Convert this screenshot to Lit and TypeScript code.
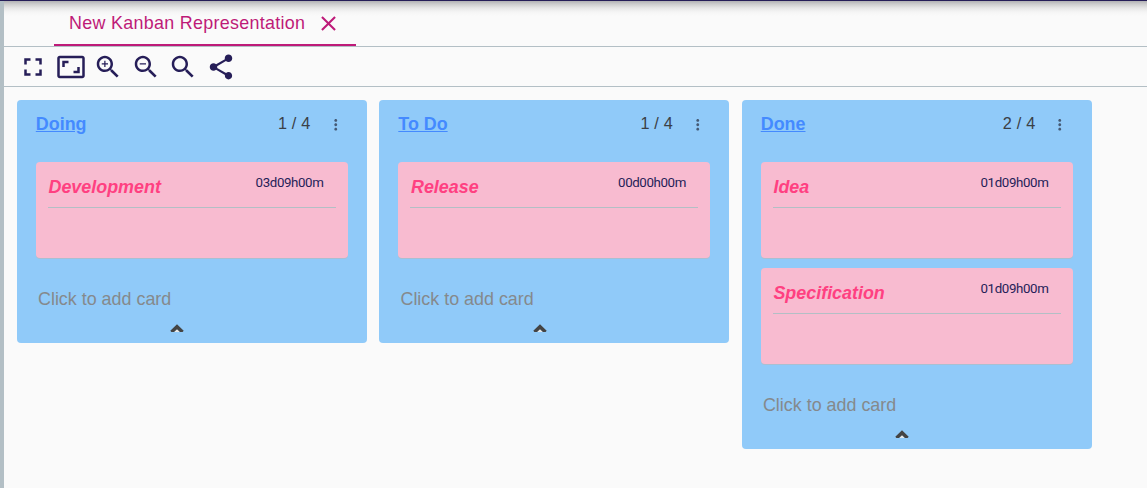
import { LitElement, html, css, svg } from "lit";
import { customElement, property } from "lit/decorators.js";

interface Card {
  label: string;
  duration: string;
}
interface Lane {
  label: string;
  count: string;
  cards: Card[];
}

const LANES: Lane[] = [
  { label: "Doing", count: "1 / 4", cards: [{ label: "Development", duration: "03d09h00m" }] },
  { label: "To Do", count: "1 / 4", cards: [{ label: "Release", duration: "00d00h00m" }] },
  {
    label: "Done",
    count: "2 / 4",
    cards: [
      { label: "Idea", duration: "01d09h00m" },
      { label: "Specification", duration: "01d09h00m" },
    ],
  },
];

const TOOLS: string[] = [
  "M7 14H5v5h5v-2H7v-3zm-2-4h2V7h3V5H5v5zm12 7h-3v2h5v-5h-2v3zM14 5v2h3v3h2V5h-5z",
  "M19 12h-2v3h-3v2h5v-5zM7 9h3V7H5v5h2V9zm14-6H3c-1.1 0-2 .9-2 2v14c0 1.1.9 2 2 2h18c1.1 0 2-.9 2-2V5c0-1.1-.9-2-2-2zm0 16.01H3V4.99h18v14.02z",
  "M15.5 14h-.79l-.28-.27C15.41 12.59 16 11.11 16 9.5 16 5.91 13.09 3 9.5 3S3 5.91 3 9.5 5.91 16 9.5 16c1.61 0 3.09-.59 4.23-1.57l.27.28v.79l5 4.99L20.49 19l-4.99-5zm-6 0C7.01 14 5 11.99 5 9.5S7.01 5 9.5 5 14 7.01 14 9.5 11.99 14 9.5 14zm2.5-4h-2v2H9v-2H7V9h2V7h1v2h2v1z",
  "M15.5 14h-.79l-.28-.27C15.41 12.59 16 11.11 16 9.5 16 5.91 13.09 3 9.5 3S3 5.91 3 9.5 5.91 16 9.5 16c1.61 0 3.09-.59 4.23-1.57l.27.28v.79l5 4.99L20.49 19l-4.99-5zm-6 0C7.01 14 5 11.99 5 9.5S7.01 5 9.5 5 14 7.01 14 9.5 11.99 14 9.5 14zM7 9h5v1H7z",
  "M15.5 14h-.79l-.28-.27C15.41 12.59 16 11.11 16 9.5 16 5.91 13.09 3 9.5 3S3 5.91 3 9.5 5.91 16 9.5 16c1.61 0 3.09-.59 4.23-1.57l.27.28v.79l5 4.99L20.49 19l-4.99-5zm-6 0C7.01 14 5 11.99 5 9.5S7.01 5 9.5 5 14 7.01 14 9.5 11.99 14 9.5 14z",
  "M18 16.08c-.76 0-1.44.3-1.96.77L8.91 12.7c.05-.23.09-.46.09-.7s-.04-.47-.09-.7l7.05-4.11c.54.5 1.25.81 2.04.81 1.66 0 3-1.34 3-3s-1.34-3-3-3-3 1.34-3 3c0 .24.04.47.09.7L8.04 9.81C7.5 9.31 6.79 9 6 9c-1.66 0-3 1.34-3 3s1.34 3 3 3c.79 0 1.5-.31 2.04-.81l7.12 4.16c-.05.21-.08.43-.08.65 0 1.61 1.31 2.92 2.92 2.92 1.61 0 2.92-1.31 2.92-2.92s-1.31-2.92-2.92-2.92z",
];

const icon = (d: string) => html`<svg class="icon" viewBox="0 0 24 24">${svg`<path d=${d}></path>`}</svg>`;

@customElement("kanban-card")
class KanbanCard extends LitElement {
  @property({ attribute: false }) card!: Card;

  static styles = css`
    :host {
      display: block;
      box-sizing: border-box;
      height: 96px;
      padding: 0 12px;
      border-radius: 4px;
      background: #f8bbd0;
      box-shadow: 0 1px 0 #a9bfd2;
    }
    .head {
      display: flex;
      justify-content: space-between;
      box-sizing: border-box;
      height: 46px;
      border-bottom: 1px solid #b3bfc5;
    }
    .label {
      padding: 14px 0 0 0.5px;
      font: italic bold 17.9px/22px "Liberation Sans", Arial, sans-serif;
      color: #ff4081;
    }
    .duration {
      padding: 12px 12.5px 0 0;
      font: 13.3px/17px Roboto, sans-serif;
      letter-spacing: -0.38px;
      color: #261e58;
    }
  `;

  render() {
    return html`<div class="head">
      <span class="label">${this.card.label}</span>
      <span class="duration">${this.card.duration}</span>
    </div>`;
  }
}

@customElement("kanban-lane")
class KanbanLane extends LitElement {
  @property({ attribute: false }) lane!: Lane;

  static styles = css`
    :host {
      display: flex;
      flex-direction: column;
      box-sizing: border-box;
      flex: none;
      width: 350px;
      padding: 0 19px;
      border-radius: 4px;
      background: #90caf9;
      font: 17.9px/24px "Liberation Sans", Arial, sans-serif;
    }
    .head {
      display: flex;
      height: 62px;
      padding-top: 12px;
      box-sizing: border-box;
    }
    .title {
      flex: 1;
      font-weight: bold;
      margin-left: -0.2px;
      color: #448aff;
      text-decoration: underline;
    }
    .count {
      font-size: 16.25px;
      line-height: 22px;
      letter-spacing: 0.19px;
      color: #3b4046;
      margin-right: 16px;
    }
    .more {
      width: 17.5px;
      height: 17.5px;
      margin: 4px 4px 0 0;
      fill: #455a75;
    }
    .cards {
      display: grid;
      gap: 10px;
    }
    .add {
      margin: 29px 0 0 2px;
      color: #85898c;
    }
    .fold {
      display: block;
      width: 14px;
      height: 8px;
      margin: 13px 0 11px 134.1px;
    }
  `;

  render() {
    return html`
      <div class="head">
        <span class="title">${this.lane.label}</span>
        <span class="count">${this.lane.count}</span>
        <svg class="more" viewBox="0 0 24 24">
          <path d="M12 8c1.1 0 2-.9 2-2s-.9-2-2-2-2 .9-2 2 .9 2 2 2zm0 2c-1.1 0-2 .9-2 2s.9 2 2 2 2-.9 2-2-.9-2-2-2zm0 6c-1.1 0-2 .9-2 2s.9 2 2 2 2-.9 2-2-.9-2-2-2z"></path>
        </svg>
      </div>
      <div class="cards">${this.lane.cards.map((c) => html`<kanban-card .card=${c}></kanban-card>`)}</div>
      <div class="add">Click to add card</div>
      <svg class="fold" viewBox="0 0 14 8">
        <path d="M4.2 8L7 4.8L9.8 8z" fill="#e8e8e8"></path>
        <path d="M0.3 6.8L7 0.2L13.7 6.8L12.6 8H10L7 5.2L4 8H1.4z" fill="#444"></path>
      </svg>
    `;
  }
}

@customElement("app-root")
class AppRoot extends LitElement {
  static styles = css`
    :host {
      display: flex;
      flex-direction: column;
      box-sizing: border-box;
      width: 100%;
      height: 488px;
      overflow: hidden;
      border-top: 1px solid #261e58;
      background: #fafafa;
      font-family: "Liberation Sans", Arial, sans-serif;
    }
    .page {
      flex: 1;
      border-left: 4px solid #b3bfc5;
    }
    .tabs {
      display: flex;
      box-sizing: border-box;
      height: 46px;
      padding-left: 50px;
      border-bottom: 1px solid #b3bfc5;
      background: linear-gradient(#b2b2b4, #cccccd 3px, #e6e6e6 7px, #f5f5f5 11px, #fafafa 15px);
    }
    .tab {
      display: flex;
      box-sizing: border-box;
      width: 302px;
      height: 45px;
      padding-left: 15px;
      border-bottom: 2px solid #be1a78;
      color: #be1a78;
      font-size: 17.9px;
      line-height: 44px;
      letter-spacing: 0.3px;
      white-space: nowrap;
    }
    .close {
      width: 25px;
      height: 25px;
      margin: 10px 0 0 11px;
      fill: #be1a78;
    }
    .tools {
      display: flex;
      align-items: center;
      gap: 7.6px;
      box-sizing: border-box;
      height: 40px;
      padding-left: 14px;
      border-bottom: 1px solid #b3bfc5;
    }
    .icon {
      width: 30px;
      height: 30px;
      fill: #261e58;
    }
    .board {
      display: flex;
      align-items: flex-start;
      gap: 12.47px;
      padding: 13px 0 0 13px;
    }
  `;

  render() {
    return html`<div class="page">
      <div class="tabs">
        <div class="tab">
          <span>New Kanban Representation</span>
          <svg class="close" viewBox="0 0 24 24">
            <path d="M19 6.41L17.59 5 12 10.59 6.41 5 5 6.41 10.59 12 5 17.59 6.41 19 12 13.41 17.59 19 19 17.59 13.41 12z"></path>
          </svg>
        </div>
      </div>
      <div class="tools">${TOOLS.map(icon)}</div>
      <div class="board">${LANES.map((l) => html`<kanban-lane .lane=${l}></kanban-lane>`)}</div>
    </div>`;
  }
}
